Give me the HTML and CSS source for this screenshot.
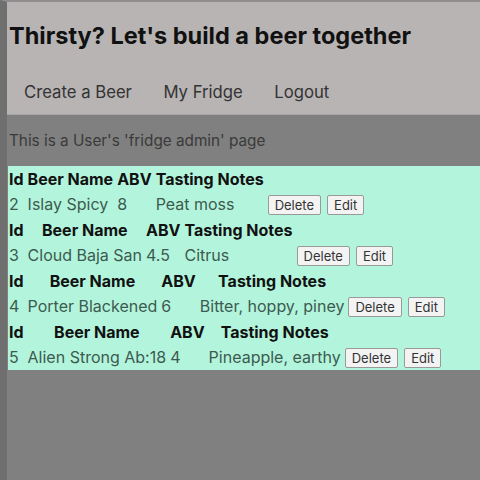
FILE: index.html
```html
<!DOCTYPE html>
<html>
<head>
<meta charset="utf-8">
<link rel="stylesheet" href="styles.css">
</head>
<body>
<header class="site-header">
  <h1 class="title">Thirsty? Let's build a beer together</h1>
  <nav class="nav">
    <a class="nav-link">Create a Beer</a>
    <a class="nav-link">My Fridge</a>
    <a class="nav-link">Logout</a>
  </nav>
</header>
<p class="intro">This is a User's 'fridge admin' page</p>
<section class="fridge">
  <table class="beer">
    <tr><th>Id</th><th>Beer Name</th><th>ABV</th><th>Tasting Notes</th><th></th></tr>
    <tr><td>2</td><td>Islay Spicy</td><td>8</td><td>Peat moss</td><td class="actions"><button class="btn">Delete</button><button class="btn">Edit</button></td></tr>
  </table>
  <table class="beer">
    <tr><th>Id</th><th>Beer Name</th><th>ABV</th><th>Tasting Notes</th><th></th></tr>
    <tr><td>3</td><td>Cloud Baja San</td><td>4.5</td><td>Citrus</td><td class="actions"><button class="btn">Delete</button><button class="btn">Edit</button></td></tr>
  </table>
  <table class="beer">
    <tr><th>Id</th><th>Beer Name</th><th>ABV</th><th>Tasting Notes</th><th></th></tr>
    <tr><td>4</td><td>Porter Blackened</td><td>6</td><td>Bitter, hoppy, piney</td><td class="actions"><button class="btn">Delete</button><button class="btn">Edit</button></td></tr>
  </table>
  <table class="beer">
    <tr><th>Id</th><th>Beer Name</th><th>ABV</th><th>Tasting Notes</th><th></th></tr>
    <tr><td>5</td><td>Alien Strong Ab:18</td><td>4</td><td>Pineapple, earthy</td><td class="actions"><button class="btn">Delete</button><button class="btn">Edit</button></td></tr>
  </table>
</section>
</body>
</html>
```
FILE: styles.css
```css
html, body {
  margin: 0;
  padding: 0;
}
body {
  background: #808080;
  border-left: 7px solid #6f6f6f;
  border-top: 2px solid #8f8d8d;
  min-height: 478px;
  font-family: Inter, "Noto Sans", sans-serif;
  color: #222;
}
.site-header {
  background: #b8b4b4;
  height: 113px;
  padding: 0 2px;
  box-sizing: border-box;
  border-bottom: 1px solid #a8a4a4;
}
.title {
  margin: 0;
  padding-top: 19px;
  font-size: 23.5px;
  font-weight: 700;
  color: #111;
}
.nav {
  display: flex;
  gap: 31.5px;
  padding-left: 15px;
  margin-top: 32px;
}
.nav-link {
  font-size: 16.7px;
  color: #333;
}
.intro {
  margin: 0;
  padding: 16px 2px 0;
  height: 35px;
  font-size: 15.3px;
  color: #3a3a3a;
}
.fridge {
  background: #b3f5dc;
  margin-left: 1px;
  padding: 0;
}
.beer {
  border-spacing: 2px 1px;
  font-size: 16px;
  margin-left: -2px;
}
.beer th {
  font-weight: 700;
  color: #111;
  padding: 1px;
  height: 22px;
}
.beer td {
  color: #3d5a50;
  padding: 1px;
  height: 22px;
}
.btn {
  font-family: Inter, "Noto Sans", sans-serif;
  font-size: 13px;
  color: #333;
  background: #f3f3f3;
  border: 1px solid #999;
  border-radius: 2px;
  padding: 1px 6px;
  margin-right: 6px;
}
```
